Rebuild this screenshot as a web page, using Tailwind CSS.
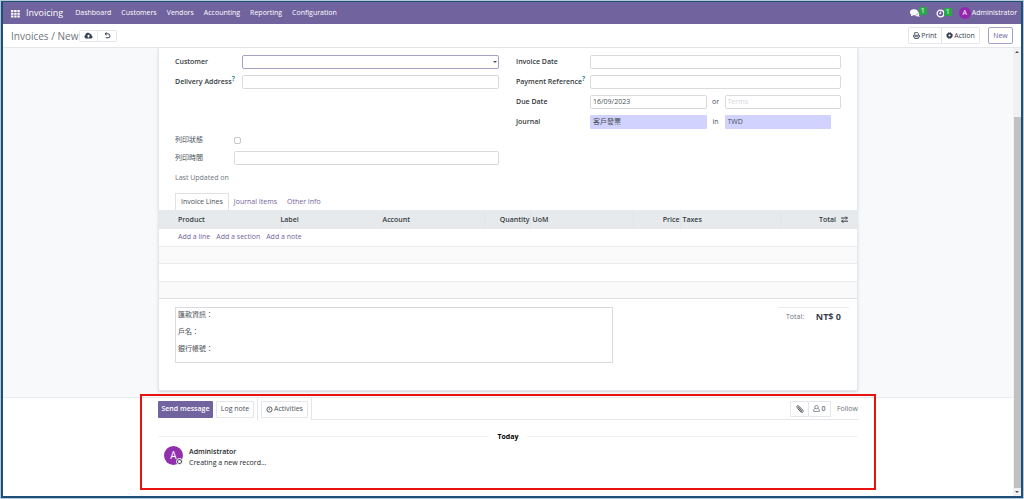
<!DOCTYPE html>
<html lang="en">
  <head>
    <meta charset="UTF-8" />
    <meta name="viewport" content="width=device-width, initial-scale=1.0" />
    <title>Invoices / New</title>
    <script src="https://cdn.jsdelivr.net/npm/@tailwindcss/browser@4"></script>
  </head>

  <body class="bg-[#b4cad6] p-px font-['Open_Sans','Noto_Sans_CJK_TC',sans-serif] text-[7px] leading-[10px] text-[#495057]">
    <div class="flex flex-col min-h-[calc(100vh-2px)] border-2 border-t border-[#1f4e79] bg-white">
      <!-- Main navbar -->
      <nav class="flex items-center h-[22px] pl-2 pr-1 bg-[#71639e] text-white">
        <button type="button" aria-label="Home menu" class="mr-[6px]">
          <svg class="size-[9px]" viewBox="0 0 9 9" fill="currentColor">
            <path d="M0 1h2.4v2H0zM3.2 1h2.4v2H3.2zM6.4 1h2.4v2H6.4zM0 3.8h2.4v2H0zM3.2 3.8h2.4v2H3.2zM6.4 3.8h2.4v2H6.4zM0 6.6h2.4v2H0zM3.2 6.6h2.4v2H3.2zM6.4 6.6h2.4v2H6.4z" />
          </svg>
        </button>
        <a href="#" class="text-[9px] mr-3">Invoicing</a>
        <div class="flex gap-[10px]">
          <a href="#">Dashboard</a>
          <a href="#">Customers</a>
          <a href="#">Vendors</a>
          <a href="#">Accounting</a>
          <a href="#">Reporting</a>
          <a href="#">Configuration</a>
        </div>
        <div class="flex items-center ml-auto">
          <button type="button" aria-label="Messages" class="relative mr-4">
            <svg class="size-[10px]" viewBox="0 0 10 10" fill="currentColor">
              <ellipse cx="4" cy="4.2" rx="4" ry="3" />
              <path d="M1.6 6L.8 8.2 4 7zM8.4 3.4C10.3 4.6 10.2 6.6 8.9 7.5l.8 1.5-2.3-.8C6 8.500 4.900 8.200 4.200 7.800 6.800 7.600 8.900 5.900 8.400 3.400z" />
            </svg>
            <span class="absolute -top-px left-[9px] size-2 leading-2 text-center bg-[#28a745] rounded-[1px]">1</span>
          </button>
          <button type="button" aria-label="Activities" class="relative mr-[14px]">
            <svg class="size-[9px]" viewBox="0 0 9 9" fill="none" stroke="currentColor" stroke-width="1.300">
              <circle cx="4.500" cy="4.500" r="3.400" />
              <path d="M4.700 2.300v2.400H3" stroke-width=".9" />
            </svg>
            <span class="absolute -top-px left-2 size-2 leading-2 text-center bg-[#28a745] rounded-[1px]">1</span>
          </button>
          <button type="button" class="flex items-center gap-px">
            <span class="size-3 leading-3 rounded-full bg-[#9527ae] text-center">A</span>
            Administrator
          </button>
        </div>
      </nav>

      <!-- Control panel -->
      <header class="flex items-center h-6 px-2 border-b border-[#e4e6e9] text-[#374151]">
        <h1 class="text-[10px] text-[#6c757d]"><a href="#">Invoices</a> / New</h1>
        <div class="flex ml-px">
          <button type="button" aria-label="Save" class="flex items-center justify-center w-[19px] h-3 border border-[#e4e6e9] rounded-l-[2px]">
            <svg class="w-[9px] h-[7px]" viewBox="0 0 9 7">
              <path fill="currentColor" d="M2 6.600A2 2 0 0 1 1.300 3 2.600 2.600 0 0 1 6 1.800 1.600 1.600 0 0 1 7.600 3.400 1.700 1.700 0 0 1 7 6.600z" />
              <path fill="#fff" d="M4.500 2.400L6.200 4.200H5.100V5.600H3.900V4.200H2.800z" />
            </svg>
          </button>
          <button type="button" aria-label="Discard" class="flex items-center justify-center w-[19px] h-3 border border-l-0 border-[#e4e6e9] rounded-r-[2px]">
            <svg class="size-[7px]" viewBox="0 0 7 7" fill="none" stroke="currentColor">
              <path d="M1.200 1.800H4A1.900 1.900 0 0 1 4 5.800H1.800M2.600.3L1 1.800 2.600 3.300" />
            </svg>
          </button>
        </div>
        <div class="flex ml-auto">
          <button type="button" class="flex items-center justify-center gap-px w-[34px] h-[17px] border border-[#e4e6e9] rounded-l-[2px]">
            <svg class="size-[7px]" viewBox="0 0 7 7" fill="none" stroke="currentColor" stroke-width=".8">
              <path d="M1.700 3V.6H4.700L5.400 1.300V3M.5 5.300V3.300H6.500V5.300M1.700 4.700H5.300V6.500H1.700z" />
            </svg>
            Print
          </button>
          <button type="button" class="flex items-center justify-center gap-px w-[38px] h-[17px] border border-l-0 border-[#e4e6e9] rounded-r-[2px]">
            <svg class="size-[7px]" viewBox="0 0 7 7" fill="none" stroke="currentColor">
              <circle cx="3.500" cy="3.500" r="1.900" stroke-width="1.700" />
              <circle cx="3.500" cy="3.500" r="2.900" stroke-width="1" stroke-dasharray="1.140 1.140" />
            </svg>
            Action
          </button>
        </div>
        <button type="button" class="w-[25px] h-[17px] ml-2 border border-[#a79fc4] rounded-[2px] text-[#71639e]">New</button>
      </header>

      <main class="flex grow">
        <div class="flex flex-col grow">
          <div class="bg-[#f8f9fb] pb-[6px] border-b border-[#e9ebee]">
            <form class="w-full max-w-[700px] mx-auto bg-white border border-t-0 border-[#e4e7eb] shadow-sm pb-[27px]">
              <div class="grid grid-cols-[324px_1fr] gap-x-[17px] px-4 pt-[7px] leading-[14px]">
                <div class="grid grid-cols-[67px_1fr] auto-rows-[14px] gap-y-[6px]">
                  <label for="customer" class="font-semibold text-[#343a40]">Customer</label>
                  <div class="relative">
                    <input id="customer" type="text" class="block w-full h-[14px] border border-[#a79fc4] rounded-[2px]" />
                    <span class="absolute right-[2px] top-[6px] border-x-2 border-t-2 border-x-transparent border-t-[#495057]"></span>
                  </div>
                  <label for="delivery" class="flex font-semibold text-[#343a40]">Delivery Address<span class="leading-2 text-[#017e84]">?</span></label>
                  <input id="delivery" type="text" class="h-[14px] border border-[#d8dadd] rounded-[2px]" />
                </div>
                <div class="grid grid-cols-[74px_1fr] auto-rows-[14px] gap-y-[6px]">
                  <label for="date" class="font-semibold text-[#343a40]">Invoice Date</label>
                  <input id="date" type="text" class="h-[14px] border border-[#d8dadd] rounded-[2px]" />
                  <label for="reference" class="flex font-semibold text-[#343a40]">Payment Reference<span class="leading-2 text-[#017e84]">?</span></label>
                  <input id="reference" type="text" class="h-[14px] border border-[#d8dadd] rounded-[2px]" />
                  <label for="due" class="font-semibold text-[#343a40]">Due Date</label>
                  <div class="grid grid-cols-[1fr_18px_1fr]">
                    <input id="due" type="text" value="16/09/2023" class="min-w-0 h-[14px] px-[2px] border border-[#d8dadd] rounded-[2px]" />
                    <label for="terms" class="text-center">or</label>
                    <input id="terms" type="text" placeholder="Terms" class="min-w-0 h-[14px] px-[2px] border border-[#d8dadd] rounded-[2px] placeholder:text-[#d5d8dc]" />
                  </div>
                  <label for="journal" class="font-semibold text-[#343a40]">Journal</label>
                  <div class="grid grid-cols-[1fr_18px_1fr]">
                    <input id="journal" type="text" value="客戶發票" class="min-w-0 h-[14px] px-[3px] bg-[#d2d2ff] rounded-[1px]" />
                    <label for="currency" class="text-center">in</label>
                    <input id="currency" type="text" value="TWD" class="min-w-0 h-[14px] mr-[10px] px-[3px] bg-[#d2d2ff] rounded-[1px]" />
                  </div>
                </div>
              </div>

              <div class="grid grid-cols-[59px_265px] items-center gap-y-[6px] pl-4 mt-[6px]">
                <label for="status">列印狀態</label>
                <input id="status" type="checkbox" class="appearance-none size-[7px] border border-[#c4c8cc] rounded-[2px]" />
                <label for="printed">列印時間</label>
                <input id="printed" type="text" class="h-[14px] border border-[#d8dadd] rounded-[2px]" />
                <span class="col-span-2 mt-[2px] text-[#6c757d]">Last Updated on</span>
              </div>

              <div class="flex mt-[10px] pl-4 text-[#71639e]">
                <button type="button" class="h-[17px] px-[5px] border border-b-0 border-[#dee2e6] text-[#495057]">Invoice Lines</button>
                <button type="button" class="h-[17px] px-[5px]">Journal Items</button>
                <button type="button" class="h-[17px] px-[5px]">Other Info</button>
              </div>

              <table class="w-full table-fixed">
                <thead class="bg-[#e7eaed] text-[#343a40] text-left">
                  <tr class="h-[19px] *:font-semibold *:border-[#e1e5e8]">
                    <th class="w-[121px] pl-[19px] border-r">Product</th>
                    <th class="w-[102px] border-r">Label</th>
                    <th class="w-[102px] border-r">Account</th>
                    <th class="w-[46px] text-right border-r">Quantity</th>
                    <th class="w-[103px] pl-[2px] border-r">UoM</th>
                    <th class="w-[47px] text-right border-r">Price</th>
                    <th class="pl-[2px] border-r">Taxes</th>
                    <th class="w-[56px] text-right">Total</th>
                    <th class="w-[21px] pl-[5px]">
                      <button type="button" aria-label="Optional columns" class="block">
                        <svg class="size-[7px]" viewBox="0 0 7 7" fill="none" stroke="currentColor">
                          <path d="M0 2H6.500M.5 5.200H7M4.800.5L6.300 2 4.800 3.500M2.200 3.700L.7 5.200 2.200 6.700" />
                        </svg>
                      </button>
                    </th>
                  </tr>
                </thead>
                <tbody>
                  <tr class="h-[17px] border-b border-[#e9ecef]">
                    <td colspan="9" class="pl-[19px]">
                      <div class="flex gap-[6px] text-[#71639e]">
                        <a href="#">Add a line</a>
                        <a href="#">Add a section</a>
                        <a href="#">Add a note</a>
                      </div>
                    </td>
                  </tr>
                  <tr class="h-[17px] border-b border-[#e9ecef] bg-[#fafafa]"><td colspan="9"></td></tr>
                  <tr class="h-[18px] border-b border-[#e9ecef]"><td colspan="9"></td></tr>
                  <tr class="h-[17px] border-b border-[#dee2e6] bg-[#fafafa]"><td colspan="9"></td></tr>
                </tbody>
              </table>

              <div class="flex justify-between mt-2 pl-4 pr-2">
                <div role="textbox" aria-label="Terms and conditions" contenteditable="true" class="w-[438px] h-14 px-[2px] pt-[2px] border border-[#d8dadd]">
                  <p class="mb-[7px]">匯款資訊：</p>
                  <p class="mb-[7px]">戶名：</p>
                  <p>銀行帳號：</p>
                </div>
                <div class="flex items-center justify-between w-[71px] h-5 px-2 border-t border-[#e9ecef]">
                  <span class="text-[#6c757d]">Total:</span>
                  <span class="text-[9px] font-bold text-[#374151]">NT$ 0</span>
                </div>
              </div>
            </form>
          </div>

          <!-- Chatter -->
          <section class="relative w-full max-w-[700px] mx-auto grow">
            <div class="flex h-[22px]">
              <button type="button" class="h-[17px] w-[55px] mt-[3px] bg-[#71639e] rounded-[1px] font-semibold text-white">Send message</button>
              <button type="button" class="h-[17px] w-[38px] mt-[3px] ml-[3px] border border-[#e4e6e9] rounded-[1px]">Log note</button>
              <div class="ml-[3px] px-[3px] pt-[3px] border-x border-[#e4e6e9]">
                <button type="button" class="flex items-center justify-center gap-px h-[17px] w-[47px] border border-[#e4e6e9] rounded-[1px]">
                  <svg class="size-[7px]" viewBox="0 0 7 7" fill="none" stroke="currentColor" stroke-width=".9">
                    <circle cx="3.500" cy="3.500" r="2.600" />
                    <path d="M3.600 1.900v1.800H2.400" stroke-width=".6" />
                  </svg>
                  Activities
                </button>
              </div>
              <div class="flex grow justify-end border-b border-[#e4e6e9] pt-[3px] text-[#6c757d]">
                <button type="button" aria-label="Attach files" class="flex items-center justify-center w-[19px] h-4 border border-[#e4e6e9] rounded-[1px]">
                  <svg class="size-2" viewBox="0 0 8 8" fill="none" stroke="#495057" stroke-width=".9" stroke-linecap="round">
                    <path d="M2.400 2.200L5.500 5.500C6.100 6.200 5.400 6.900 4.800 6.300L1.100 2.700C-.1 1.400 1.500-.1 2.800 1.100L6.700 5.100C8 6.700 6.400 8.300 4.900 6.900L2 4.100" />
                  </svg>
                </button>
                <button type="button" aria-label="Followers" class="flex items-center justify-center gap-px w-[22px] h-4 border border-l-0 border-[#e4e6e9] rounded-[1px] font-semibold">
                  <svg class="size-[7px]" viewBox="0 0 7 7" fill="none" stroke="currentColor" stroke-width=".8">
                    <circle cx="3.500" cy="2.200" r="1.700" />
                    <path d="M2.300 3.300C1 3.600.6 4.800.6 6.400H6.400C6.400 4.800 6 3.600 4.700 3.300" />
                  </svg>
                  0
                </button>
                <button type="button" class="ml-[6px] h-4">Follow</button>
              </div>
            </div>

            <div class="flex items-center gap-2 mt-3 text-black font-bold">
              <hr class="grow border-[#f0f1f3]" />
              Today
              <hr class="grow border-[#f0f1f3]" />
            </div>

            <div class="flex gap-[6px] mt-1 pl-[6px]">
              <div class="relative size-[19px] leading-[19px] rounded-full bg-[#9030ad] text-white text-center text-[10px]">
                A
                <span class="absolute right-0 bottom-0 size-[7px] rounded-full border border-white bg-[#495057] p-px"><span class="block size-[3px] rounded-full bg-white"></span></span>
              </div>
              <div class="leading-[11px] text-[#212529]">
                <p class="font-semibold">Administrator</p>
                <p>Creating a new record...</p>
              </div>
            </div>

            <div class="absolute -top-1 -left-[18px] -right-[18px] h-24 border-2 border-[#e8130f] pointer-events-none"></div>
          </section>
        </div>

        <!-- Scrollbar -->
        <div class="flex flex-col items-center w-2 bg-[#f1f1f1]">
          <span class="my-[3px] border-x-2 border-b-2 border-x-transparent border-b-[#505050]"></span>
          <div class="w-[7px] grow mt-[61px] bg-[#c1c1c1]"></div>
          <span class="my-[3px] border-x-2 border-t-2 border-x-transparent border-t-[#505050]"></span>
        </div>
      </main>
    </div>
  </body>
</html>
